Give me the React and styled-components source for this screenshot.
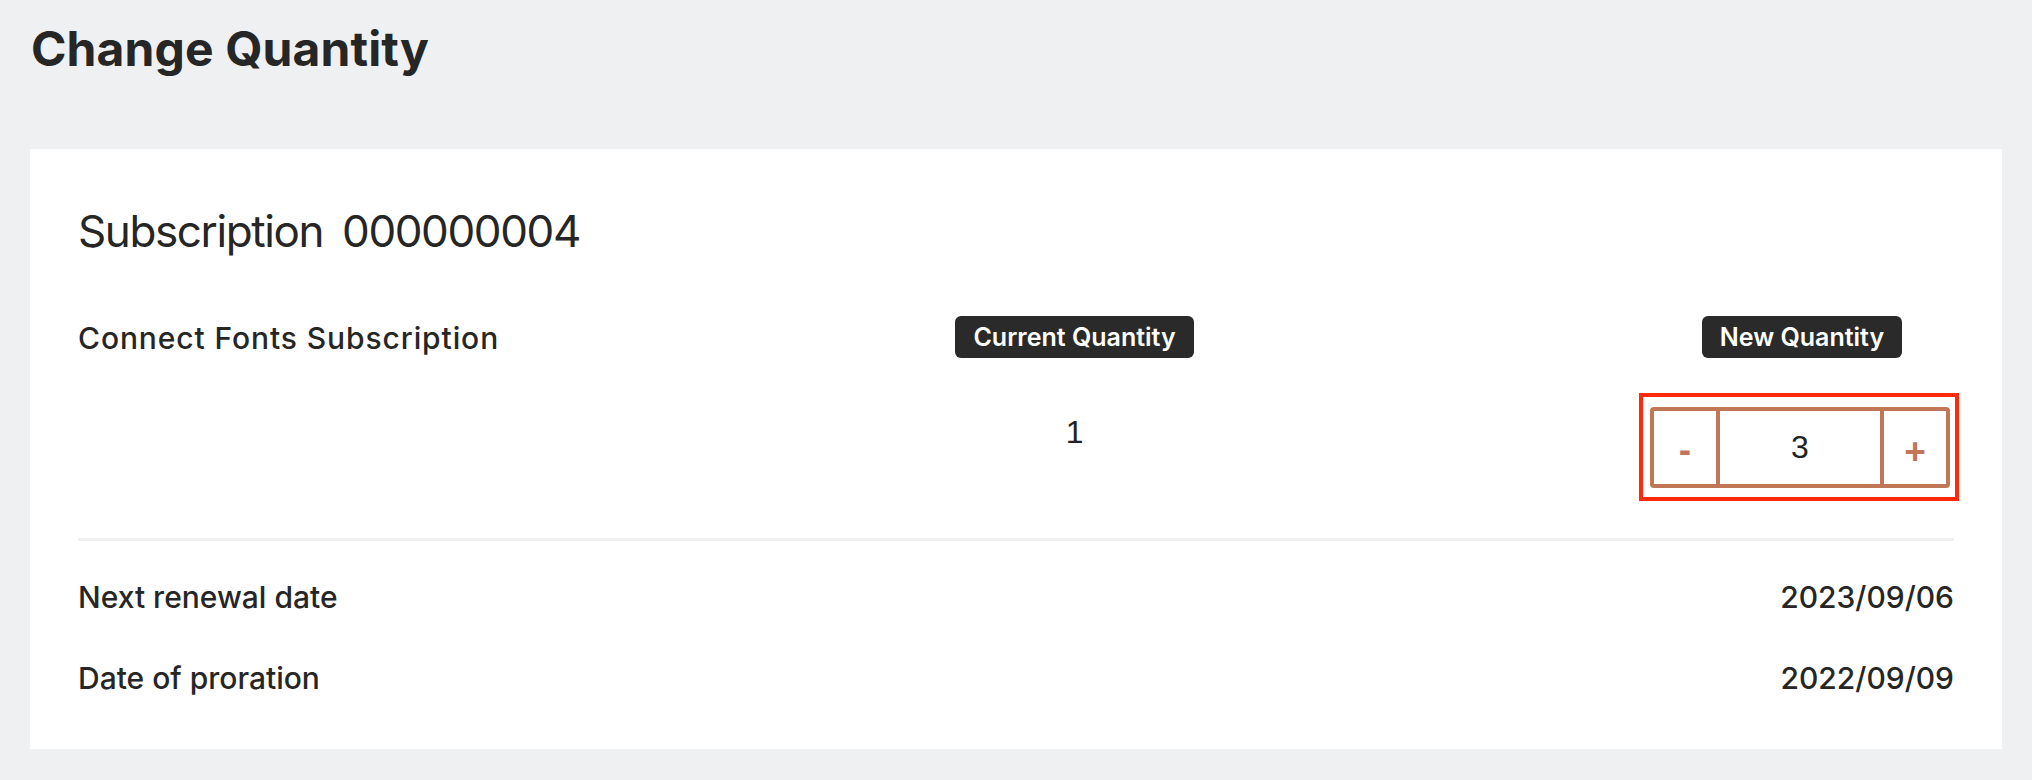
import React from "react";
import styled, { createGlobalStyle } from "styled-components";

const GlobalStyle = createGlobalStyle`
  html, body {
    margin: 0;
    padding: 0;
    background: #eff0f2;
  }
  body {
    font-family: "Inter", "Liberation Sans", sans-serif;
    color: #262626;
  }
  * { box-sizing: border-box; }
`;

const Page = styled.main`
  padding: 21px 30px 31px 30px;
`;

const Title = styled.h1`
  margin: 0 0 72px 1px;
  font-size: 48px;
  line-height: 56px;
  font-weight: 700;
  letter-spacing: 0.1px;
  color: #262626;
`;

const Card = styled.section`
  background: #ffffff;
  padding: 56px 48px 53px 48px;
`;

const Heading = styled.h2`
  margin: 0;
  display: flex;
  gap: 19px;
  font-size: 44px;
  line-height: 52px;
  font-weight: 400;
  letter-spacing: -1.4px;
  color: #262626;
`;

const Columns = styled.div`
  margin-top: 59px;
  display: flex;
  justify-content: space-between;
  align-items: flex-start;
`;

const ProductName = styled.div`
  height: 42px;
  padding-top: 2px;
  display: flex;
  align-items: center;
  font-size: 30px;
  font-weight: 500;
  letter-spacing: 0.9px;
`;

const QtyColumn = styled.div`
  width: ${(p) => p.$width || "auto"};
  display: flex;
  flex-direction: column;
  align-items: center;
`;

const Badge = styled.span`
  height: 42px;
  padding: 0 18px;
  display: inline-flex;
  align-items: center;
  background: #2a2a2a;
  color: #ffffff;
  border-radius: 6px;
  font-size: 25px;
  font-weight: 600;
  white-space: nowrap;
`;

const CurrentValue = styled.div`
  margin-top: 56px;
  font-family: "Liberation Sans", Arial, sans-serif;
  font-size: 32px;
  color: #222222;
`;

const StepperWrap = styled.div`
  position: relative;
  margin-top: 49px;
  align-self: flex-start;
`;

const Highlight = styled.div`
  position: absolute;
  left: -11px;
  top: -14px;
  right: -9px;
  bottom: -13px;
  border: 4px solid #ff2a0a;
  pointer-events: none;
`;

const Stepper = styled.div`
  width: 300px;
  height: 81px;
  display: grid;
  grid-template-columns: 66px 1fr 66px;
  border: 4px solid #c17657;
  border-radius: 4px;
`;

const StepButton = styled.button`
  border: none;
  ${(p) => (p.$side === "left" ? "border-right" : "border-left")}: 4px solid #c17657;
  background: transparent;
  color: #c17657;
  font-family: "Liberation Sans", Arial, sans-serif;
  font-weight: 700;
  font-size: 37px;
  padding: ${(p) => (p.$side === "left" ? "4px 0 0" : "9px 0 0")};
  display: flex;
  align-items: center;
  justify-content: center;
  cursor: pointer;
`;

const QtyInput = styled.input`
  width: 100%;
  border: none;
  outline: none;
  background: transparent;
  text-align: center;
  font-family: "Liberation Sans", Arial, sans-serif;
  font-size: 32px;
  color: #222222;
  padding: 0;
`;

const Divider = styled.hr`
  margin: 50px 0 0;
  border: none;
  height: 3px;
  background: #f1f1f2;
`;

const Details = styled.div`
  margin-top: 38px;
  display: flex;
  flex-direction: column;
  gap: 45px;
`;

const DetailRow = styled.div`
  display: flex;
  justify-content: space-between;
  align-items: center;
  line-height: 36px;
  font-size: 30px;
`;

const DetailLabel = styled.span`
  font-weight: 500;
`;

const DetailValue = styled.span`
  font-weight: 500;
`;

export default function App() {
  const details = [
    { label: "Next renewal date", value: "2023/09/06" },
    { label: "Date of proration", value: "2022/09/09" },
  ];
  return (
    <>
      <GlobalStyle />
      <Page>
        <Title>Change Quantity</Title>
        <Card>
          <Heading>
            <span>Subscription</span>
            <span>000000004</span>
          </Heading>
          <Columns>
            <ProductName>Connect Fonts Subscription</ProductName>
            <QtyColumn>
              <Badge>Current Quantity</Badge>
              <CurrentValue>1</CurrentValue>
            </QtyColumn>
            <QtyColumn $width="304px">
              <Badge>New Quantity</Badge>
              <StepperWrap>
                <Stepper>
                  <StepButton $side="left" type="button">-</StepButton>
                  <QtyInput type="text" value="3" readOnly />
                  <StepButton $side="right" type="button">+</StepButton>
                </Stepper>
                <Highlight />
              </StepperWrap>
            </QtyColumn>
          </Columns>
          <Divider />
          <Details>
            {details.map((d) => (
              <DetailRow key={d.label}>
                <DetailLabel>{d.label}</DetailLabel>
                <DetailValue>{d.value}</DetailValue>
              </DetailRow>
            ))}
          </Details>
        </Card>
      </Page>
    </>
  );
}
